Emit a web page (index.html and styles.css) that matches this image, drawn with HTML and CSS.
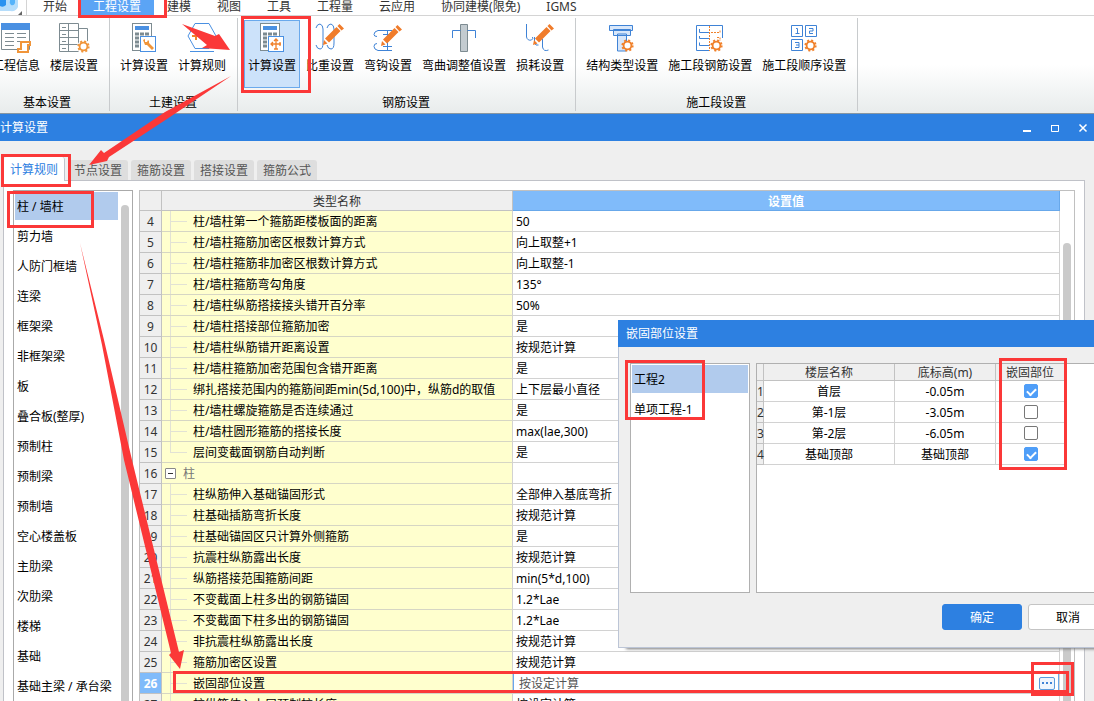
FILE: index.html
```html
<!DOCTYPE html>
<html lang="zh-CN">
<head>
<meta charset="utf-8">
<title>计算设置</title>
<link rel="stylesheet" href="styles.css">
</head>
<body>
<svg class="defs" aria-hidden="true">
  <symbol id="gear" viewBox="0 0 14 14">
    <circle cx="7" cy="7" r="5.6" fill="none" stroke="currentColor" stroke-width="2" stroke-dasharray="2.2 2.2"/>
    <circle cx="7" cy="7" r="4.2" fill="#fff" stroke="currentColor" stroke-width="2"/>
  </symbol>
  <symbol id="calc" viewBox="0 0 24 30">
    <rect x=".5" y=".5" width="19" height="27" fill="#fff" stroke="#7d8b91"/>
    <rect x="3" y="3" width="14" height="4" fill="#4a90e2"/>
    <path d="M3 11h14M3 15h14M3 19h14M3 23h14" stroke="#7d8b91" stroke-width="3" stroke-dasharray="4 1"/>
    <rect x="8.500" y="13.500" width="15" height="15" fill="#fff" stroke="#4a90e2"/>
  </symbol>
  <symbol id="pencil" viewBox="0 0 22 22">
    <path d="M1 21l1-5 3.500 3.500zM3 14.500L14.500 3 18.500 7 7 18.500zM15.500 2l2-2L22 4.500l-2.500 2z" fill="#f07c2b"/>
  </symbol>
</svg>

<header class="top">
  <div class="logo">
    <svg width="30" height="15" viewBox="0 0 30 15"><path d="M0 0h18v7q-2 5-8 4H0z" fill="#b5ddfb"/><path d="M0 0h6v5q-3 3-6 1z" fill="#2b93f0"/><path d="M10 0h5v3q-1 3-4 2-2-2-1-5z" fill="#55b3fa"/><path d="M22 11v4h-4z" fill="#666"/><path d="M26.500 0v15" stroke="#d4d4d4"/></svg>
  </div>
  <nav class="menu">
    <a href="#">开始</a><a href="#" class="on">工程设置</a><a href="#">建模</a><a href="#">视图</a><a href="#">工具</a><a href="#">工程量</a><a href="#">云应用</a><a href="#">协同建模(限免)</a><a href="#">IGMS</a>
  </nav>
</header>

<section class="ribbon">
  <div class="group first">
    <div class="tools">
      <button><svg width="32" height="32" viewBox="0 0 32 32"><path d="M1.500 2.500h28v26h-28z" fill="#fff" stroke="#7d8b91"/><path d="M1 2h29v7H1z" fill="#4a90e2"/><path d="M5 12.500h9M17 12.500h9M5 16.500h9M17 16.500h9M5 20.500h9M17 20.500h5M5 24.500h9" stroke="#7d8b91"/><path d="M21 21h9v3h-2v7h-10v-3h3z" fill="#fff" stroke="#f0953a" stroke-width="2"/></svg>工程信息</button>
      <button><svg width="32" height="32" viewBox="0 0 32 32"><path d="M1.500 2.500h19v28h-19zM10.500 2.500v28M1.500 9.500h19M1.500 16.500h19M1.500 23.500h19M20.500 7.500h9v15M4 6.500h4M4 13.500h4M4 20.500h4M4 27.500h4" fill="none" stroke="#7d8b91"/><circle cx="26" cy="26" r="7" fill="#fff"/><use href="#gear" x="19" y="19" width="13" height="13" color="#f0953a"/></svg>楼层设置</button>
    </div>
    <h2>基本设置</h2>
  </div>
  <div class="group">
    <div class="tools">
      <button><svg width="32" height="32" viewBox="0 0 32 32"><use href="#calc" x="4" y="2" width="24" height="30"/><path d="M15 19l2-1v3h2l1-2 1 1v2l5 5-2 2-5-5h-2z" fill="#f0953a"/></svg>计算设置</button>
      <button><svg width="32" height="32" viewBox="0 0 32 32"><path d="M9 2.500h14L30 15l-7 12.500H9L2 15z" fill="#fff" stroke="#4a90e2"/><path d="M4 30.500h24" stroke="#4a90e2"/><path d="M6 15h8M10 11v8M18 15h8" stroke="#f0812b" stroke-width="2"/></svg>计算规则</button>
    </div>
    <h2>土建设置</h2>
  </div>
  <div class="group">
    <div class="tools">
      <button class="on"><svg width="32" height="32" viewBox="0 0 32 32"><use href="#calc" x="4" y="2" width="24" height="30"/><path d="M20 19v9M15 23h10M18 20l2-2 2 2M18 28h4M17 21l-2 2 2 2M24 21v4" fill="none" stroke="#f0812b" stroke-width="1.300"/></svg>计算设置</button>
      <button><svg width="32" height="32" viewBox="0 0 32 32"><path d="M2 7q1-4 4-4 3 1 3 5v14q0 6-3 6-3 0-4-4M13 7q1-4 4-4 3 1 3 5v14q0 6-3 6-3 0-4-4" fill="none" stroke="#3f83d6"/><use href="#pencil" x="8" y="3" width="22" height="22"/></svg>比重设置</button>
      <button><svg width="32" height="32" viewBox="0 0 32 32"><path d="M20 9.500H6q-4 1-4 4 0 2 3 2M20 29.500H6q-4-1-4-4 0-3 3-3M15.500 9v20M11 13.500h9M11 25.500h9" fill="none" stroke="#3f83d6"/><use href="#pencil" x="8" y="4" width="22" height="22"/></svg>弯钩设置</button>
      <button><svg width="32" height="32" viewBox="0 0 32 32"><path d="M12.500 3.500h7v27h-7z" fill="#c3cbd0" stroke="#7d8b91"/><path d="M4.500 17V9.500h8M19.500 9.500h8V17" fill="none" stroke="#3f83d6"/></svg>弯曲调整值设置</button>
      <button><svg width="32" height="32" viewBox="0 0 32 32"><path d="M2.500 3v13q1 4 5 3 2-1 1-3M10.500 16v6q1 3 4 2M18.500 18v8q1 5 6 3" fill="none" stroke="#3f83d6"/><use href="#pencil" x="8" y="3" width="22" height="22"/></svg>损耗设置</button>
    </div>
    <h2>钢筋设置</h2>
  </div>
  <div class="group">
    <div class="tools">
      <button><svg width="32" height="32" viewBox="0 0 32 32"><path d="M11.500 13h9v17h-9zM7.500 8.500h17v6h-17zM3.500 4.500h23v5h-23z" fill="#d8e7fa" stroke="#3f83d6"/><use href="#gear" x="15" y="18" width="13" height="13" color="#f0812b"/></svg>结构类型设置</button>
      <button><svg width="32" height="32" viewBox="0 0 32 32"><path d="M15 29.500H2.500v-25h26V17M15 11.500H5.500V8M15 17.500H5.500V15M15 24.500H5.500v-3" fill="none" stroke="#3f83d6"/><path d="M15.500 5v25M17 11.500h9V9M23 16.500h3V20" fill="none" stroke="#f0812b" stroke-dasharray="2 1"/><use href="#gear" x="16" y="18" width="13" height="13" color="#f0812b"/></svg>施工段钢筋设置</button>
      <button><svg width="32" height="32" viewBox="0 0 32 32"><path d="M3.500 4.500h11v11h-11zM17.500 4.500h11v11h-11zM3.500 18.500h11v11h-11zM8 7.500h1.500v5M7.500 12.500h4M21 7.500h4V10h-3.500v2.500H25M7 21.500h4v5H7M8 24h3" fill="none" stroke="#3f83d6"/><use href="#gear" x="16" y="18" width="13" height="13" color="#f0812b"/></svg>施工段顺序设置</button>
    </div>
    <h2>施工段设置</h2>
  </div>
</section>

<main class="window">
  <div class="titlebar">
    <h1>计算设置</h1>
    <div class="winbtns">
      <button aria-label="最小化"><svg width="10" height="10"><path d="M1 7h8v2H1z" fill="#fff"/></svg></button>
      <button aria-label="最大化"><svg width="10" height="10"><path d="M1.500 2v6.500h7V2M1 2.500h8" fill="none" stroke="#fff"/><path d="M1 2h8v1H1z" fill="#fff"/></svg></button>
      <button aria-label="关闭"><svg width="10" height="10"><path d="M1.500 1.500l7 7M8.500 1.500l-7 7" stroke="#fff" stroke-width="1.500"/></svg></button>
    </div>
  </div>
  <div class="tabs">
    <button class="on">计算规则</button><button>节点设置</button><button>箍筋设置</button><button>搭接设置</button><button>箍筋公式</button>
  </div>
  <div class="panel">
    <div class="side">
      <ul class="list">
        <li class="on">柱 / 墙柱</li><li>剪力墙</li><li>人防门框墙</li><li>连梁</li><li>框架梁</li><li>非框架梁</li><li>板</li><li>叠合板(整厚)</li><li>预制柱</li><li>预制梁</li><li>预制墙</li><li>空心楼盖板</li><li>主肋梁</li><li>次肋梁</li><li>楼梯</li><li>基础</li><li>基础主梁 / 承台梁</li>
      </ul>
      <div class="track"><div class="thumb side-thumb"></div></div>
    </div>
    <div class="sheet">
      <table class="grid">
        <colgroup><col class="c-no"><col class="c-name"><col></colgroup>
        <thead><tr><th></th><th>类型名称</th><th class="on">设置值</th></tr></thead>
        <tbody>
          <tr><th>4</th><td class="leaf">柱/墙柱第一个箍筋距楼板面的距离</td><td>50</td></tr>
          <tr><th>5</th><td class="leaf">柱/墙柱箍筋加密区根数计算方式</td><td>向上取整+1</td></tr>
          <tr><th>6</th><td class="leaf">柱/墙柱箍筋非加密区根数计算方式</td><td>向上取整-1</td></tr>
          <tr><th>7</th><td class="leaf">柱/墙柱箍筋弯勾角度</td><td>135°</td></tr>
          <tr><th>8</th><td class="leaf">柱/墙柱纵筋搭接接头错开百分率</td><td>50%</td></tr>
          <tr><th>9</th><td class="leaf">柱/墙柱搭接部位箍筋加密</td><td>是</td></tr>
          <tr><th>10</th><td class="leaf">柱/墙柱纵筋错开距离设置</td><td>按规范计算</td></tr>
          <tr><th>11</th><td class="leaf">柱/墙柱箍筋加密范围包含错开距离</td><td>是</td></tr>
          <tr><th>12</th><td class="leaf">绑扎搭接范围内的箍筋间距min(5d,100)中，纵筋d的取值</td><td>上下层最小直径</td></tr>
          <tr><th>13</th><td class="leaf">柱/墙柱螺旋箍筋是否连续通过</td><td>是</td></tr>
          <tr><th>14</th><td class="leaf">柱/墙柱圆形箍筋的搭接长度</td><td>max(lae,300)</td></tr>
          <tr><th>15</th><td class="leaf last">层间变截面钢筋自动判断</td><td>是</td></tr>
          <tr><th>16</th><td class="parent"><button class="fold" aria-label="折叠"></button>柱</td><td></td></tr>
          <tr><th>17</th><td class="leaf">柱纵筋伸入基础锚固形式</td><td>全部伸入基底弯折</td></tr>
          <tr><th>18</th><td class="leaf">柱基础插筋弯折长度</td><td>按规范计算</td></tr>
          <tr><th>19</th><td class="leaf">柱基础锚固区只计算外侧箍筋</td><td>是</td></tr>
          <tr><th>20</th><td class="leaf">抗震柱纵筋露出长度</td><td>按规范计算</td></tr>
          <tr><th>21</th><td class="leaf">纵筋搭接范围箍筋间距</td><td>min(5*d,100)</td></tr>
          <tr><th>22</th><td class="leaf">不变截面上柱多出的钢筋锚固</td><td>1.2*Lae</td></tr>
          <tr><th>23</th><td class="leaf">不变截面下柱多出的钢筋锚固</td><td>1.2*Lae</td></tr>
          <tr><th>24</th><td class="leaf">非抗震柱纵筋露出长度</td><td>按规范计算</td></tr>
          <tr><th>25</th><td class="leaf">箍筋加密区设置</td><td>按规范计算</td></tr>
          <tr class="on"><th>26</th><td class="leaf">嵌固部位设置</td><td><div class="edit"><input type="text" value="按设定计算" aria-label="嵌固部位设置"><button aria-label="更多"><svg width="10" height="2"><path d="M0 0h2v2H0zM4 0h2v2H4zM8 0h2v2H8z" fill="#3f83d6"/></svg></button></div></td></tr>
          <tr><th>27</th><td class="leaf">柱纵筋伸入上层预制柱长度</td><td>按设定计算</td></tr>
        </tbody>
      </table>
      <div class="track"><div class="thumb sheet-thumb"></div></div>
    </div>
  </div>
</main>

<section class="dialog" role="dialog" aria-labelledby="dlg-title">
  <h2 id="dlg-title">嵌固部位设置</h2>
  <div class="dialog-body">
    <ul class="list box"><li class="on">工程2</li><li>单项工程-1</li></ul>
    <div class="box floors-box">
      <table class="floors">
        <colgroup><col class="f-no"><col class="f-name"><col class="f-level"><col class="f-fix"></colgroup>
        <thead><tr><th></th><th>楼层名称</th><th>底标高(m)</th><th>嵌固部位</th></tr></thead>
        <tbody>
          <tr><th>1</th><td>首层</td><td>-0.05m</td><td class="check"><input type="checkbox" aria-label="首层" checked></td></tr>
          <tr><th>2</th><td>第-1层</td><td>-3.05m</td><td class="check"><input type="checkbox" aria-label="第-1层"></td></tr>
          <tr><th>3</th><td>第-2层</td><td>-6.05m</td><td class="check"><input type="checkbox" aria-label="第-2层"></td></tr>
          <tr><th>4</th><td>基础顶部</td><td>基础顶部</td><td class="check"><input type="checkbox" aria-label="基础顶部" checked></td></tr>
        </tbody>
      </table>
    </div>
  </div>
  <div class="actions"><button class="primary">确定</button><button>取消</button></div>
</section>

<svg class="marks" width="1094" height="701" viewBox="0 0 1094 701" aria-hidden="true">
  <g fill="none" stroke="#fb3838" stroke-width="3">
    <path d="M79.500 0v16.500h86V0"/>
    <rect x="242.500" y="17.500" width="67" height="74"/>
    <rect x="2.500" y="155.500" width="67" height="30"/>
    <rect x="8.500" y="192.500" width="84" height="34"/>
    <rect x="626.500" y="361.500" width="77" height="57"/>
    <rect x="1000.500" y="359.500" width="65" height="109"/>
    <rect x="174.500" y="672.500" width="893" height="19"/>
    <rect x="1032.500" y="663.500" width="40" height="31"/>
  </g>
  <g fill="#fb3838">
    <path d="M182 24L215 36 219 34 230 50 202 48 207 45z"/>
    <path d="M231 76L170 117 109 157 107 161 89 165 101 150 104 153 165 112z"/>
    <path d="M80 243L104 340 132 460 179 652 184 650 180 669 169 655 171 653 124 460 102 345z"/>
  </g>
</svg>
</body>
</html>
```
FILE: styles.css
```css
* { box-sizing: border-box; }

body {
  margin: 0;
  height: 100vh;
  position: relative;
  display: flex;
  flex-direction: column;
  overflow: hidden;
  background: #fff;
  color: #000;
  font: 12px/20px "Noto Sans", "Noto Sans CJK SC", sans-serif;
}

h1, h2 { margin: 0; font-size: 12px; font-weight: normal; }
ul { margin: 0; padding: 0; list-style: none; }
button, input { font: inherit; color: inherit; }
button { border: 0; padding: 0; background: none; white-space: nowrap; }
svg { display: block; }
.defs { position: absolute; width: 0; height: 0; }

/* menu bar */
.top { display: flex; height: 16px; flex: none; border-bottom: 1px solid #d4d4d4; }
.logo { width: 30px; overflow: hidden; }
.menu { display: flex; }
.menu a { padding: 0 13px; line-height: 14px; height: 15px; color: #333; text-decoration: none; white-space: nowrap; }
.menu .on { background: #5ba4f5; color: #fff; }

/* ribbon */
.ribbon {
  display: flex;
  flex: none;
  height: 98px;
  padding: 2px 0;
  border-bottom: 1px solid #8796a2;
  background: linear-gradient(#fff 50%, #e8ecec);
}
.group {
  display: flex;
  flex-direction: column;
  padding: 2px 7px 0 6px;
  border-right: 1px solid #c8cbcd;
}
.group.first { margin-left: -18px; }
.group.first h2 { padding-left: 4px; }
.group h2 { text-align: center; padding-top: 5px; }
.tools { display: flex; gap: 2px; }
.tools button {
  display: flex;
  flex-direction: column;
  align-items: center;
  height: 68px;
  padding: 0 3px;
  border: 1px solid transparent;
  line-height: 26px;
}
.tools .on { background: #cce2fa; border-color: #6aa9ec; }

/* settings window */
.window { flex: 1; min-height: 0; display: flex; flex-direction: column; background: #efefef; }
.titlebar {
  display: flex;
  justify-content: space-between;
  align-items: center;
  height: 27px;
  flex: none;
  background: #2d80e1;
  color: #fff;
}
.winbtns { display: flex; gap: 6px; }
.winbtns button { width: 22px; height: 22px; display: grid; place-items: center; }

.tabs { display: flex; align-items: flex-end; gap: 3px; height: 39px; flex: none; padding-left: 4px; }
.tabs button { height: 20px; padding: 2px 6px 0; line-height: 18px; background: #dedede; color: #555; border-radius: 3px 3px 0 0; }
.tabs .on {
  position: relative;
  height: 24px;
  margin-bottom: -1px;
  background: #fff;
  color: #2d80e1;
  border-right: 1px solid #c0c4cc;
}

.panel {
  flex: 1;
  min-height: 0;
  display: flex;
  gap: 6px;
  margin: 0 9px 0 3px;
  padding: 9px 9px 0;
  border: 1px solid #c0c2c8;
  border-bottom: 0;
  background: #fff;
}
.side { width: 120px; display: flex; overflow: hidden; border: 1px solid #aaa; border-bottom: 0; }
.list { flex: 1; padding: 1px; display: flex; flex-direction: column; gap: 2px; white-space: nowrap; }
.list li { flex: none; padding: 2px 2px 0; line-height: 26px; }
.list .on { background: #b1cbed; }
.side .list { padding-right: 0; }
.track { width: 14px; padding: 0 3px; display: flex; }
.thumb { width: 8px; border-radius: 4px 4px 0 0; background: #cacaca; }
.side-thumb { margin-top: 14px; }
.sheet-thumb { margin-top: 52px; }
.sheet { flex: 1; min-width: 0; display: flex; overflow: hidden; border: 1px solid #c0c0c0; border-bottom: 0; }

table { border-collapse: separate; border-spacing: 0; table-layout: fixed; }
th { font-weight: normal; }
th, td {
  padding: 2px 0 0;
  line-height: 18px;
  border: 0 solid #d2d2d2;
  border-width: 0 1px 1px 0;
  white-space: nowrap;
}

.grid { flex: 1; width: 100%; align-self: flex-start; }
.grid tr { height: 21px; }
.grid thead tr { height: 20px; }
.grid thead th { line-height: 17px; }
.grid th { background: #efefef; border-color: #c2c2c2; color: #333; }
.grid thead .on { background: #80bbfa; border-color: #68a8ea; color: #fff; font-weight: bold; }
.grid td { padding-left: 3px; }
.c-no { width: 22px; }
.c-name { width: 351px; }
.grid .leaf {
  padding-left: 31px;
  border-bottom-color: #d6d6c4;
  background:
    linear-gradient(#e2e2d4, #e2e2d4) 9px 10px / 16px 1px no-repeat,
    linear-gradient(#e2e2d4, #e2e2d4) 8px 0 / 1px 100% no-repeat,
    #ffffce;
}
.grid .last {
  background:
    linear-gradient(#e2e2d4, #e2e2d4) 9px 10px / 16px 1px no-repeat,
    linear-gradient(#e2e2d4, #e2e2d4) 8px 0 / 1px 11px no-repeat,
    #ffffce;
}
.grid .parent { background: #ffffce; color: #777; border-bottom-color: #d6d6c4; }
.fold {
  width: 11px;
  height: 11px;
  margin-right: 7px;
  vertical-align: 0;
  border: 1px solid #888;
  border-radius: 1px;
  background: linear-gradient(#333, #333) center / 5px 1px no-repeat #fff;
}
.grid .on > th { background: #80bbfa; color: #fff; font-weight: bold; }
.grid .on > td:last-child { padding: 0; }
.edit {
  display: flex;
  align-items: center;
  height: 20px;
  padding-right: 3px;
  border: 1px solid #68a8ea;
}
.edit input { flex: 1; min-width: 0; height: 18px; padding: 2px 5px 0; border: 0; outline: 0; background: none; color: #555; }
.edit button {
  display: grid;
  place-items: center;
  width: 16px;
  height: 13px;
  border: 1px solid #5b9bdc;
  border-radius: 2px;
  background: #eef5fd;
}

/* dialog floats over the settings window and runs past its right edge */
.dialog {
  position: absolute;
  left: 618px;
  top: 320px;
  width: 502px;
  border: 1px solid #bcc5d6;
  border-top: 0;
  background: #efefef;
  box-shadow: 6px 3px 3px -2px #777;
}
.dialog > h2 { margin-left: -1px; padding-left: 8px; line-height: 27px; background: #2d80e1; color: #fff; }
.dialog-body { display: flex; gap: 6px; padding: 16px 11px 11px; }
.box { height: 230px; border: 1px solid #b0b0b0; background: #fff; }
.box.list { flex: none; width: 120px; }
.floors-box { flex: 1; }
.floors { width: 308px; text-align: center; }
.floors tr { height: 21px; }
.floors thead tr { height: 17px; }
.floors thead th { line-height: 14px; }
.floors th { background: #efefef; border-color: #c2c2c2; color: #333; }
.f-no { width: 7px; }
.f-name { width: 131px; }
.f-level { width: 101px; }
.f-fix { width: 69px; }
.floors .check { padding: 0 0 0 2px; }
.floors input {
  appearance: none;
  display: block;
  width: 14px;
  height: 14px;
  margin: 0 auto;
  border: 1px solid #777;
  border-radius: 2px;
  background: #fff;
}
.floors input:checked { border-color: #4f9ef8; background: #4f9ef8; }
.floors input:checked::before {
  content: "";
  display: block;
  width: 7px;
  height: 4px;
  margin: 3px auto;
  border: solid #fff;
  border-width: 0 0 2px 2px;
  rotate: -45deg;
}
.actions { display: flex; justify-content: flex-end; gap: 6px; padding: 0 11px 17px; }
.actions button { width: 80px; height: 26px; padding-top: 2px; border: 1px solid #c4c4c4; border-radius: 3px; background: #fff; }
.actions .primary { border-color: #2d80e1; background: #2d80e1; color: #fff; }

/* highlight frames and arrows */
.marks { position: absolute; left: 0; top: 0; pointer-events: none; }
```
